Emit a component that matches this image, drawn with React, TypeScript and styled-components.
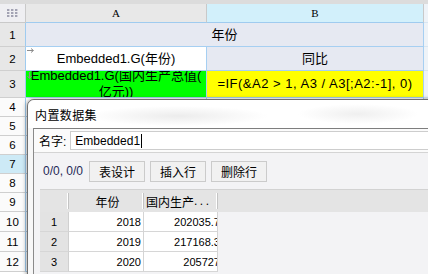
import React from "react";
import styled, {createGlobalStyle} from "styled-components";

const GlobalStyle = createGlobalStyle`
html, body {
margin: 0;
padding: 0;
background: #ffffff;
overflow: hidden;
}
body {
font-family: "Liberation Sans", "Noto Sans CJK SC", sans-serif;
color: #000;
}
`

const Page = styled.div`
position: relative;
width: 428px;
height: 274px;
overflow: hidden;
`
const TopStrip = styled.div`
height: 4px;
background: #dcdcdc;
`
const Sheet = styled.div`
display: grid;
grid-template-columns: 26px 181px 217px 1fr;
grid-template-rows: 19px 24px 24px 27px repeat(6, 19px) repeat(3, 20px);
`
const Corner = styled.div`
display: flex;
align-items: center;
justify-content: center;
background: #efeff2;
border-right: 1px solid #c9c9c9;
border-bottom: 1px solid #c9c9c9;
`
const ColHead = styled.div<{ $active?: boolean }>`
display: flex;
align-items: center;
justify-content: center;
background: ${p => p.$active ? "#d2f0fb" : "#e8e8e8"};
border-right: 1px solid #c9c9c9;
border-bottom: 1px solid #9fcbef;
font-family: "Liberation Serif", serif;
font-size: 11px;
`
const RowHead = styled.div<{ $tone: "used" | "plain" | "active" }>`
display: flex;
align-items: center;
justify-content: center;
background: ${p => p.$tone === "used" ? "#e7e7e7" : p.$tone === "active" ? "#cdeaf6" : "#fbfbfb"};
border-right: 1px solid #9fcbef;
border-bottom: 1px solid #cfcfcf;
font-size: 11.5px;
`
const Cell = styled.div<{ $bg?: string; $span?: number; $spaced?: boolean }>`
position: relative;
display: flex;
align-items: center;
justify-content: center;
text-align: center;
overflow: hidden;
grid-column: span ${p => p.$span || 1};
background: ${p => p.$bg || "#ffffff"};
border-right: 1px solid #a6cff2;
border-bottom: 1px solid #a6cff2;
font-size: 13px;
line-height: 16px;
letter-spacing: ${p => p.$spaced ? "0.5px" : "0"};
white-space: nowrap;
`
const Filler = styled.div`
background: #eef3f8;
border-bottom: 1px solid #d8e6f2;
`
const Marker = styled.svg`
position: absolute;
left: 1px;
top: 1px;
`

const Dialog = styled.div`
position: absolute;
left: 27px;
top: 99px;
width: 420px;
height: 200px;
display: flex;
flex-direction: column;
background: #f7f7f7;
border: 1px solid #6f6f6f;
border-radius: 7px 7px 0 0;
box-shadow: -1px 0 4px rgba(0, 0, 0, 0.35);
`
const TitleBar = styled.div`
height: 28px;
display: flex;
align-items: center;
padding-left: 7px;
font-size: 12px;
letter-spacing: 0.4px;
background: radial-gradient(ellipse 90px 10px at 150px 16px, #ececec, rgba(255, 255, 255, 0)),
radial-gradient(ellipse 60px 10px at 330px 14px, #efefef, rgba(255, 255, 255, 0)),
#ffffff;
border-radius: 7px 7px 0 0;
`
const Body = styled.div`
flex: 1;
margin-left: 5px;
display: flex;
flex-direction: column;
background: #f3f3f5;
border-top: 1px solid #7e7e7e;
border-left: 1px solid #8a8a8a;
`
const NameRow = styled.div`
height: 23px;
display: flex;
align-items: center;
padding-left: 5px;
background: #fbfbfb;
border-bottom: 1px solid #d4d4d4;
font-size: 12px;
`
const NameInput = styled.div`
flex: 1;
height: 19px;
margin-left: 4px;
display: flex;
align-items: center;
padding-left: 4px;
background: #ffffff;
border: 1px solid #cdcdcd;
border-right: none;
box-sizing: border-box;
font-size: 12px;
`
const Caret = styled.span`
display: inline-block;
width: 1px;
height: 14px;
margin-left: 1px;
background: #000;
`
const Toolbar = styled.div`
height: 36px;
display: flex;
align-items: center;
gap: 5px;
padding-left: 9px;
font-size: 12px;
`
const Counter = styled.span`
color: #1f2a55;
margin-right: 1px;
`
const Button = styled.div`
width: 56px;
height: 21px;
box-sizing: border-box;
display: flex;
align-items: center;
justify-content: center;
background: #f1f1f1;
border: 1px solid #cbcbcb;
font-size: 12px;
`
const TableArea = styled.div`
margin-left: 6px;
border-top: 1px solid #d2d2d2;
display: grid;
grid-template-columns: 29px 75px 74px 1fr;
grid-template-rows: 22px repeat(3, 20px);
`
const HeadCell = styled.div<{ $align?: string }>`
position: relative;
display: flex;
align-items: center;
justify-content: ${p => p.$align || "center"};
padding-left: 2px;
background: #e4e4e4;
font-size: 12px;
white-space: nowrap;
overflow: hidden;
&::after {
content: "";
position: absolute;
right: 0;
top: 3px;
bottom: 3px;
width: 1px;
background: #c4c4c4;
box-shadow: -1px 0 0 #ffffff;
}
`
const HeadRest = styled.div`
background: #e4e4e4;
`
const Dots = styled.span`
letter-spacing: 2.5px;
`
const IndexCell = styled.div`
display: flex;
align-items: center;
justify-content: center;
background: #e3e3e3;
border-right: 1px solid #d0d0d0;
border-bottom: 1px solid #d6d6d6;
font-size: 11px;
`
const ValueCell = styled.div<{ $shift?: number }>`
display: flex;
align-items: center;
justify-content: flex-end;
padding-right: 2px;
overflow: hidden;
background: #ffffff;
border-right: 1px solid #d4d4d4;
border-bottom: 1px solid #d6d6d6;
font-size: 11px;
white-space: nowrap;
span {
margin-right: ${p => -(p.$shift || 0)}px;
}
`
const Empty = styled.div``

const rows = [
    {year: "2018", gdp: "202035.7"},
    {year: "2019", gdp: "217168.3"},
    {year: "2020", gdp: "205727"},
]

function GridIcon() {
    return (
        <svg width="11" height="8" viewBox="0 0 11 8">
            {[0, 1, 2].map(r => [0, 1, 2].map(c => (
                <rect key={`${r}-${c}`} x={c * 4} y={r * 3} width="2.4" height="2" fill="#a3a3b3"/>
            )))}
        </svg>
    )
}

function RightArrow() {
    return (
        <Marker width="8" height="5" viewBox="0 0 8 5">
            <path d="M0 2.5 H6 M4 0.5 L6.5 2.5 L4 4.5" stroke="#8c8c8c" strokeWidth="1" fill="none"/>
        </Marker>
    )
}

function DownArrow() {
    return (
        <Marker width="5" height="8" viewBox="0 0 5 8">
            <path d="M2.5 0 V6 M0.5 4 L2.5 6.5 L4.5 4" stroke="#8c8c8c" strokeWidth="1" fill="none"/>
        </Marker>
    )
}

export default function App() {
    const blankRows = [4, 5, 6, 7, 8, 9, 10, 11, 12]
    return (
        <Page>
            <GlobalStyle/>
            <TopStrip/>
            <Sheet>
                <Corner><GridIcon/></Corner>
                <ColHead>A</ColHead>
                <ColHead $active>B</ColHead>
                <Filler/>

                <RowHead $tone="used">1</RowHead>
                <Cell $bg="#e6e9f2" $span={2}>年份</Cell>
                <Filler/>

                <RowHead $tone="used">2</RowHead>
                <Cell><RightArrow/>Embedded1.G(年份)</Cell>
                <Cell $bg="#e6e9f2">同比</Cell>
                <Filler/>

                <RowHead $tone="used">3</RowHead>
                <Cell $bg="#00ff00"><DownArrow/><div>Embedded1.G(国内生产总值(<br/>亿元))</div></Cell>
                <Cell $bg="#ffff00" $spaced>=IF(&amp;A2 &gt; 1, A3 / A3[;A2:-1], 0)</Cell>
                <Filler/>

                {blankRows.map(n => (
                    <React.Fragment key={n}>
                        <RowHead $tone={n === 7 ? "active" : "plain"}>{n}</RowHead>
                        <Cell/>
                        <Cell/>
                        <Filler/>
                    </React.Fragment>
                ))}
            </Sheet>

            <Dialog>
                <TitleBar>内置数据集</TitleBar>
                <Body>
                    <NameRow>
                        名字:
                        <NameInput>Embedded1<Caret/></NameInput>
                    </NameRow>
                    <Toolbar>
                        <Counter>0/0, 0/0</Counter>
                        <Button>表设计</Button>
                        <Button>插入行</Button>
                        <Button>删除行</Button>
                    </Toolbar>
                    <TableArea>
                        <HeadCell/>
                        <HeadCell>年份</HeadCell>
                        <HeadCell $align="flex-start">国内生产<Dots>...</Dots></HeadCell>
                        <HeadRest/>
                        {rows.map((r, i) => (
                            <React.Fragment key={r.year}>
                                <IndexCell>{i + 1}</IndexCell>
                                <ValueCell><span>{r.year}</span></ValueCell>
                                <ValueCell $shift={5}><span>{r.gdp}</span></ValueCell>
                                <Empty/>
                            </React.Fragment>
                        ))}
                    </TableArea>
                </Body>
            </Dialog>
        </Page>
    )
}
